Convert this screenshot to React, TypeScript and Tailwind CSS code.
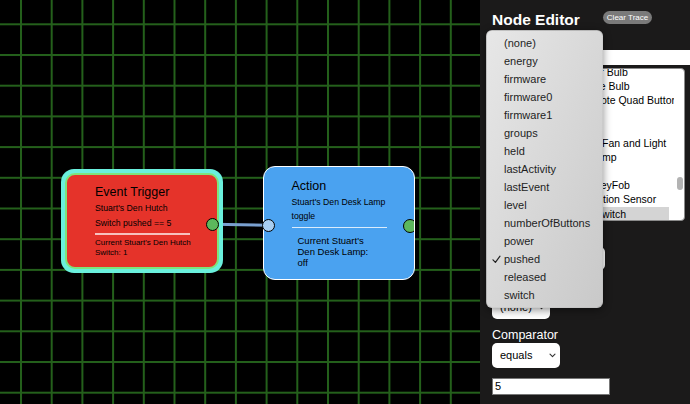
import React from 'react';

const attributes = [
  '(none)',
  'energy',
  'firmware',
  'firmware0',
  'firmware1',
  'groups',
  'held',
  'lastActivity',
  'lastEvent',
  'level',
  'numberOfButtons',
  'power',
  'pushed',
  'released',
  'switch',
];

const devices = [
  "Stuart's Bedroom Color Bulb",
  "Stuart's Bedroom White Bulb",
  "Stuart's Den Pico Remote Quad Button",
  "Stuart's Den Hutch",
  "Stuart's Den Outlet",
  "Stuart's Family Ceiling Fan and Light",
  "Stuart's Den Corner Lamp",
  "Stuart's Den Dimmer",
  "Stuart's Office Aqara KeyFob",
  "Stuart's Den Sonoff Motion Sensor",
  "Stuart's Den Hallway Switch",
];

const Chevron = () => (
  <svg width="7" height="5" viewBox="0 0 7 5" className="shrink-0">
    <path d="M1 1.2l2.5 2.5L6 1.2" fill="none" stroke="#333" strokeWidth="1.1" strokeLinecap="round" strokeLinejoin="round" />
  </svg>
);

const Canvas: React.FC = () => (
  <div className="relative h-full w-[480px] shrink-0 overflow-hidden bg-black">
    <svg className="absolute inset-0" width="480" height="404">
      <defs>
        <pattern id="grid" x="20" y="23.3" width="30.7" height="30.7" patternUnits="userSpaceOnUse">
          <rect x="0" y="0" width="2" height="30.7" fill="#24601b" />
          <rect x="0" y="0" width="30.7" height="2" fill="#24601b" />
        </pattern>
      </defs>
      <rect width="480" height="404" fill="url(#grid)" />
      <line x1="213" y1="224.3" x2="268" y2="225.3" stroke="#79a0cf" strokeWidth="3" />
    </svg>

    {/* Event Trigger node */}
    <div className="absolute left-[61px] top-[169px] h-[104px] w-[162px] rounded-[13px] bg-[#6af0dd] p-[4px]">
      <div className="h-full rounded-[10px] border-2 border-[#7ee37a] bg-[#e5332a] pl-[28px] pt-[9px] text-black">
        <div className="text-[12.5px] leading-[16px]">Event Trigger</div>
        <div className="mt-[2px] text-[8.7px] leading-[12px]">Stuart's Den Hutch</div>
        <div className="mt-[2.5px] text-[8.7px] leading-[12px]">Switch pushed == 5</div>
        <div className="mt-[4.5px] h-[1.5px] w-[95px] bg-white/70" />
        <div className="mt-[3.5px] w-[97px] text-[8px] leading-[10px]">Current Stuart's Den Hutch Switch: 1</div>
      </div>
    </div>

    {/* Action node */}
    <div className="absolute left-[263px] top-[166px] h-[114px] w-[152px] overflow-hidden rounded-[12px] border-[1.5px] border-white bg-[#4aa2f0] pl-[27.5px] pt-[10.5px] text-black">
      <div className="text-[12.5px] leading-[16px]">Action</div>
      <div className="mt-[2px] text-[8.7px] leading-[12px]">Stuart's Den Desk Lamp</div>
      <div className="mt-[2.5px] text-[8.7px] leading-[12px]">toggle</div>
      <div className="mt-[4.5px] h-[1.5px] w-[95px] bg-white/80" />
      <div className="ml-[6px] mt-[7px] w-[80px] text-[9.5px] leading-[11px]">Current Stuart's Den Desk Lamp: off</div>
      <div className="absolute left-[138.5px] top-[51.5px] h-[14px] w-[14px] rounded-full border-[1.5px] border-black bg-[#5cb85c]" />
    </div>

    {/* ports */}
    <div className="absolute left-[206.2px] top-[217.8px] h-[13px] w-[13px] rounded-full border-[1.5px] border-black bg-[#5cb85c]" />
    <div className="absolute left-[261.8px] top-[218.8px] h-[13px] w-[13px] rounded-full border-[1.5px] border-black bg-[#a7cdf0]" />
  </div>
);

const Sidebar: React.FC = () => (
  <aside className="relative h-full w-[210px] shrink-0 overflow-hidden bg-[#1b1a1a] pl-3 pt-[10px] text-white">
    <div className="flex items-start">
      <h2 className="text-[15.5px] font-bold leading-[20px]">Node Editor</h2>
      <button className="ml-[23px] mt-[1px] h-[13px] rounded-full bg-[#7a7a7a] px-[4px] text-[8px] leading-[13px] text-white">
        Clear Trace
      </button>
    </div>

    <div className="mt-[3px] text-[12px] leading-[16px]">Device</div>
    <div className="mt-[1px] h-[15px] w-[200px] bg-white" />

    {/* device list */}
    <div className="relative mt-[3px] h-[153px] w-[193px] overflow-hidden rounded-[4px] border border-[#8a8a8a] bg-white">
      <div className="-mt-[4px] w-[181px] overflow-hidden">
        {devices.map((d, i) => (
          <div
            key={d}
            className={
              'w-[176px] whitespace-nowrap pl-[2px] text-[10.5px] leading-[14.15px] text-black ' +
              (i === devices.length - 1 ? 'bg-[#d4d4d4]' : '')
            }
          >
            {d}
          </div>
        ))}
      </div>
      <div className="absolute right-[1px] top-[108px] h-[13px] w-[6px] rounded-full bg-[#b3b3b3]" />
    </div>

    <div className="mt-[6px] text-[12.5px] leading-[16px]">Attribute</div>
    <div className="mt-[4px] flex h-[23px] w-[113px] items-center justify-between rounded-[5px] bg-white pl-[8px] pr-[6px] text-[11px] text-black">
      <span>pushed</span>
      <Chevron />
    </div>

    <div className="mt-[3px] text-[12.5px] leading-[16px]">Value Attribute</div>
    <div className="mt-[6px] flex h-[24px] w-[58px] items-center justify-between rounded-[5px] bg-white pl-[8px] pr-[5px] text-[11px] text-black">
      <span>(none)</span>
      <Chevron />
    </div>

    <div className="mt-[9px] text-[12.5px] leading-[15px]">Comparator</div>
    <div className="flex h-[25px] w-[68px] items-center justify-between rounded-[5px] bg-white pl-[8px] pr-[4px] text-[11px] text-black">
      <span>equals</span>
      <Chevron />
    </div>

    <div className="mt-[10px] h-[17px] w-[118px] border border-[#777] bg-white pl-[2px] text-[11px] leading-[15px] text-black">5</div>

    {/* open attribute menu */}
    <div className="absolute left-[6px] top-[30px] h-[278px] w-[117px] rounded-[6px] border border-black/10 bg-linear-to-br from-[#e7e7e7] to-[#c9c9c9] pt-[3px] shadow-[0_2px_8px_rgba(0,0,0,0.45)]">
      {attributes.map(a => (
        <div key={a} className="relative h-[18px] pl-[17px] text-[11px] leading-[18px] text-[#1e1e1e]">
          {a === 'pushed' && (
            <svg className="absolute left-[5px] top-[5px]" width="9" height="9" viewBox="0 0 9 9">
              <path d="M1 4.8L3.4 7.3 8 1.2" fill="none" stroke="#222" strokeWidth="1.2" strokeLinecap="round" strokeLinejoin="round" />
            </svg>
          )}
          {a}
        </div>
      ))}
    </div>
  </aside>
);

export default function App() {
  return (
    <div className="flex h-[404px] w-[690px] overflow-hidden font-['Liberation_Sans',Arial,sans-serif]">
      <Canvas />
      <Sidebar />
    </div>
  );
}
